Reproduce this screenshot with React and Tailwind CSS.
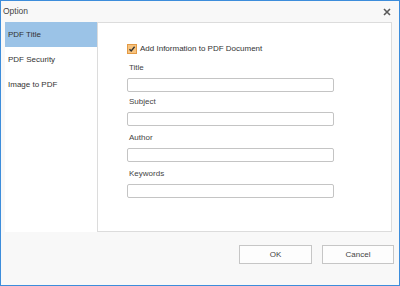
import { useState } from 'react'

const NAV = ['PDF Title', 'PDF Security', 'Image to PDF']
const FIELDS = [
  { label: 'Title', mt: 'mt-[8px]' },
  { label: 'Subject', mt: 'mt-[4px]' },
  { label: 'Author', mt: 'mt-[6px]' },
  { label: 'Keywords', mt: 'mt-[6px]' },
]

export default function App() {
  const [active, setActive] = useState('PDF Title')
  const [checked, setChecked] = useState(true)

  return (
    <div className="w-[400px] h-[286px] border border-[#3d8ddb] bg-[#f8f8f8] flex flex-col font-['Liberation_Sans',Arial,sans-serif] text-[#333]">
      {/* Title bar */}
      <div className="h-[21px] flex items-center justify-between pl-[2px] pr-[8px]">
        <span className="text-[8.5px] text-[#444]">Option</span>
        <svg width="8" height="8" viewBox="0 0 8 8" className="text-[#5a5a5a]">
          <path d="M1 1 L7 7 M7 1 L1 7" stroke="currentColor" strokeWidth="1.6" />
        </svg>
      </div>

      {/* Body */}
      <div className="flex pl-[4px] h-[210px]">
        <div className="w-[92px] bg-white flex flex-col">
          {NAV.map((n) => (
            <button
              key={n}
              onClick={() => setActive(n)}
              className={`h-[25px] pl-[3px] flex items-center text-left text-[8px] ${
                active === n ? 'bg-[#9bc3e7]' : 'bg-white'
              }`}
            >
              {n}
            </button>
          ))}
        </div>

        <div className="w-[295px] border border-[#dcdcdc] bg-white pl-[29px] pt-[21px] flex flex-col">
          <label className="h-[10px] flex items-center gap-[3px] text-[8px] cursor-pointer">
            <span
              onClick={() => setChecked(!checked)}
              className="w-[10px] h-[10px] border border-[#e39a45] bg-[#f7c37e] flex items-center justify-center"
            >
              {checked && (
                <svg width="8" height="8" viewBox="0 0 8 8">
                  <path d="M1.5 4.2 L3.2 6 L6.6 1.8" fill="none" stroke="#333" strokeWidth="1.4" />
                </svg>
              )}
            </span>
            Add Information to PDF Document
          </label>

          {FIELDS.map((f) => (
            <div key={f.label} className={`${f.mt} flex flex-col`}>
              <span className="h-[12px] pl-[2px] flex items-center text-[8px] text-[#444]">{f.label}</span>
              <input
                type="text"
                className="mt-[4px] w-[207px] h-[14px] border border-[#c4c4c4] rounded-[2px] bg-white outline-none text-[8px] px-1"
              />
            </div>
          ))}
        </div>
      </div>

      {/* Footer */}
      <div className="flex justify-end gap-[10px] pr-[5px] pt-[13px]">
        <button className="w-[73px] h-[19px] border border-[#c6c6c6] bg-[#fdfdfd] text-[8px] text-[#444]">OK</button>
        <button className="w-[72px] h-[19px] border border-[#c6c6c6] bg-[#fdfdfd] text-[8px] text-[#444]">Cancel</button>
      </div>
    </div>
  )
}
